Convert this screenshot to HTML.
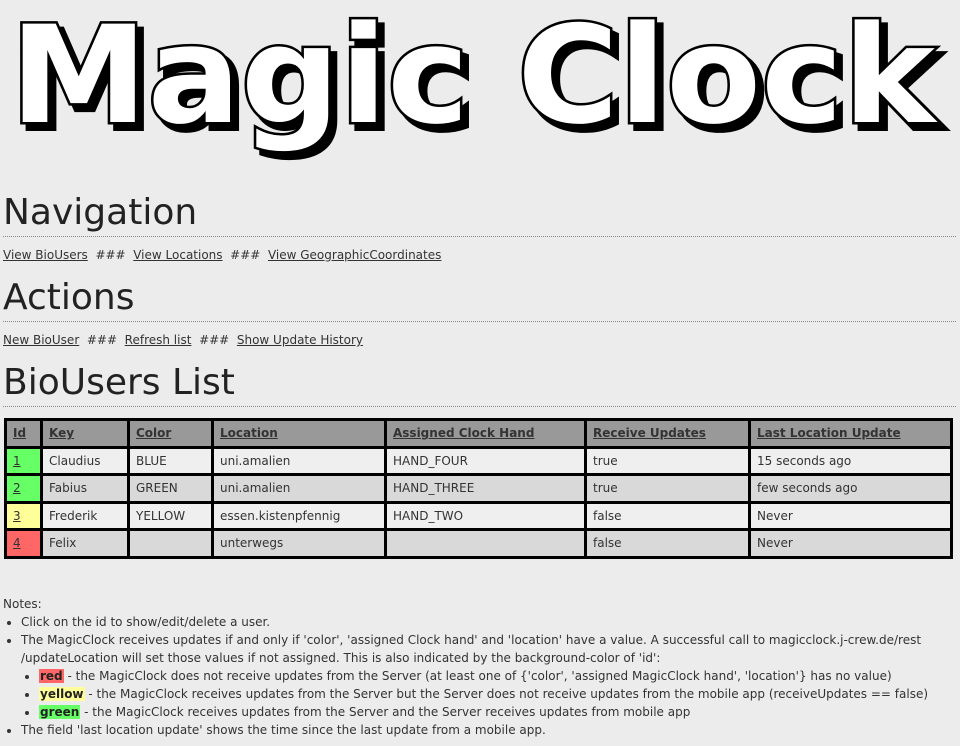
<!DOCTYPE html>
<html><head><meta charset="utf-8"><style>
body{margin:0;width:960px;height:746px;background:#ececec;font-family:"DejaVu Sans","Liberation Sans",sans-serif;color:#333;font-size:12px;overflow:hidden;position:relative}
.a{position:absolute;white-space:nowrap}
h1{position:absolute;margin:0;font-weight:normal;font-size:36px;color:#222;left:3px;line-height:40px}
.hr{position:absolute;left:3px;width:953px;border-top:1px dotted #888}
a{color:#333;text-decoration:underline}
table{position:absolute;left:4px;top:418px;width:949px;border-collapse:collapse;font-size:12px}
td,th{border:3px solid #000;height:24.5px;padding:0 6px;text-align:left}
th{background:#999;font-weight:bold}
th a{color:#333}
tr.o td{background:#efefef} tr.e td{background:#d9d9d9}
td.g{background:#66ff66!important} td.y{background:#ffff99!important} td.r{background:#ff6666!important}
.n{line-height:18px}
ul{margin:0;padding-left:18px} ul ul{padding-left:18px;list-style:disc}
.b{font-weight:bold;color:#222;padding:0 1px}
</style></head><body>
<svg class="a" style="left:0;top:0" width="960" height="180">
<g font-family="DejaVu Sans" font-weight="bold" font-size="135">
<text x="16" y="128" textLength="925" lengthAdjust="spacingAndGlyphs" fill="#000" stroke="#000" stroke-width="6">Magic Clock</text>
<text x="10" y="122" textLength="925" lengthAdjust="spacingAndGlyphs" fill="#fff" stroke="#000" stroke-width="5" paint-order="stroke">Magic Clock</text>
</g></svg>
<h1 style="top:193px">Navigation</h1>
<div class="hr" style="top:236px"></div>
<div class="a" style="left:3px;top:248px"><a>View BioUsers</a> &nbsp;### &nbsp;<a>View Locations</a> &nbsp;### &nbsp;<a>View GeographicCoordinates</a></div>
<h1 style="top:278px">Actions</h1>
<div class="hr" style="top:321px"></div>
<div class="a" style="left:3px;top:333px"><a>New BioUser</a> &nbsp;### &nbsp;<a>Refresh list</a> &nbsp;### &nbsp;<a>Show Update History</a></div>
<h1 style="top:363px">BioUsers List</h1>
<div class="hr" style="top:406px"></div>
<table>
<colgroup><col style="width:36px"><col style="width:87px"><col style="width:84px"><col style="width:173px"><col style="width:200px"><col style="width:164px"><col></colgroup>
<tr><th><a>Id</a></th><th><a>Key</a></th><th><a>Color</a></th><th><a>Location</a></th><th><a>Assigned Clock Hand</a></th><th><a>Receive Updates</a></th><th><a>Last Location Update</a></th></tr>
<tr class="o"><td class="g"><a>1</a></td><td>Claudius</td><td>BLUE</td><td>uni.amalien</td><td>HAND_FOUR</td><td>true</td><td>15 seconds ago</td></tr>
<tr class="e"><td class="g"><a>2</a></td><td>Fabius</td><td>GREEN</td><td>uni.amalien</td><td>HAND_THREE</td><td>true</td><td>few seconds ago</td></tr>
<tr class="o"><td class="y"><a>3</a></td><td>Frederik</td><td>YELLOW</td><td>essen.kistenpfennig</td><td>HAND_TWO</td><td>false</td><td>Never</td></tr>
<tr class="e"><td class="r"><a>4</a></td><td>Felix</td><td></td><td>unterwegs</td><td></td><td>false</td><td>Never</td></tr>
</table>
<div class="a n" style="left:3px;top:595px;white-space:normal;width:950px">Notes:
<ul>
<li>Click on the id to show/edit/delete a user.</li>
<li>The MagicClock receives updates if and only if 'color', 'assigned Clock hand' and 'location' have a value. A successful call to <span style="white-space:nowrap">magicclock.j-crew.de/rest</span> /updateLocation will set those values if not assigned. This is also indicated by the background-color of 'id':
<ul>
<li><span class="b" style="background:#ff6666">red</span> - the MagicClock does not receive updates from the Server (at least one of {'color', 'assigned MagicClock hand', 'location'} has no value)</li>
<li style="white-space:nowrap"><span class="b" style="background:#ffff99">yellow</span> - the MagicClock receives updates from the Server but the Server does not receive updates from the mobile app (receiveUpdates == false)</li>
<li><span class="b" style="background:#66ff66">green</span> - the MagicClock receives updates from the Server and the Server receives updates from mobile app</li>
</ul></li>
<li>The field 'last location update' shows the time since the last update from a mobile app.</li>
</ul></div>
</body></html>
